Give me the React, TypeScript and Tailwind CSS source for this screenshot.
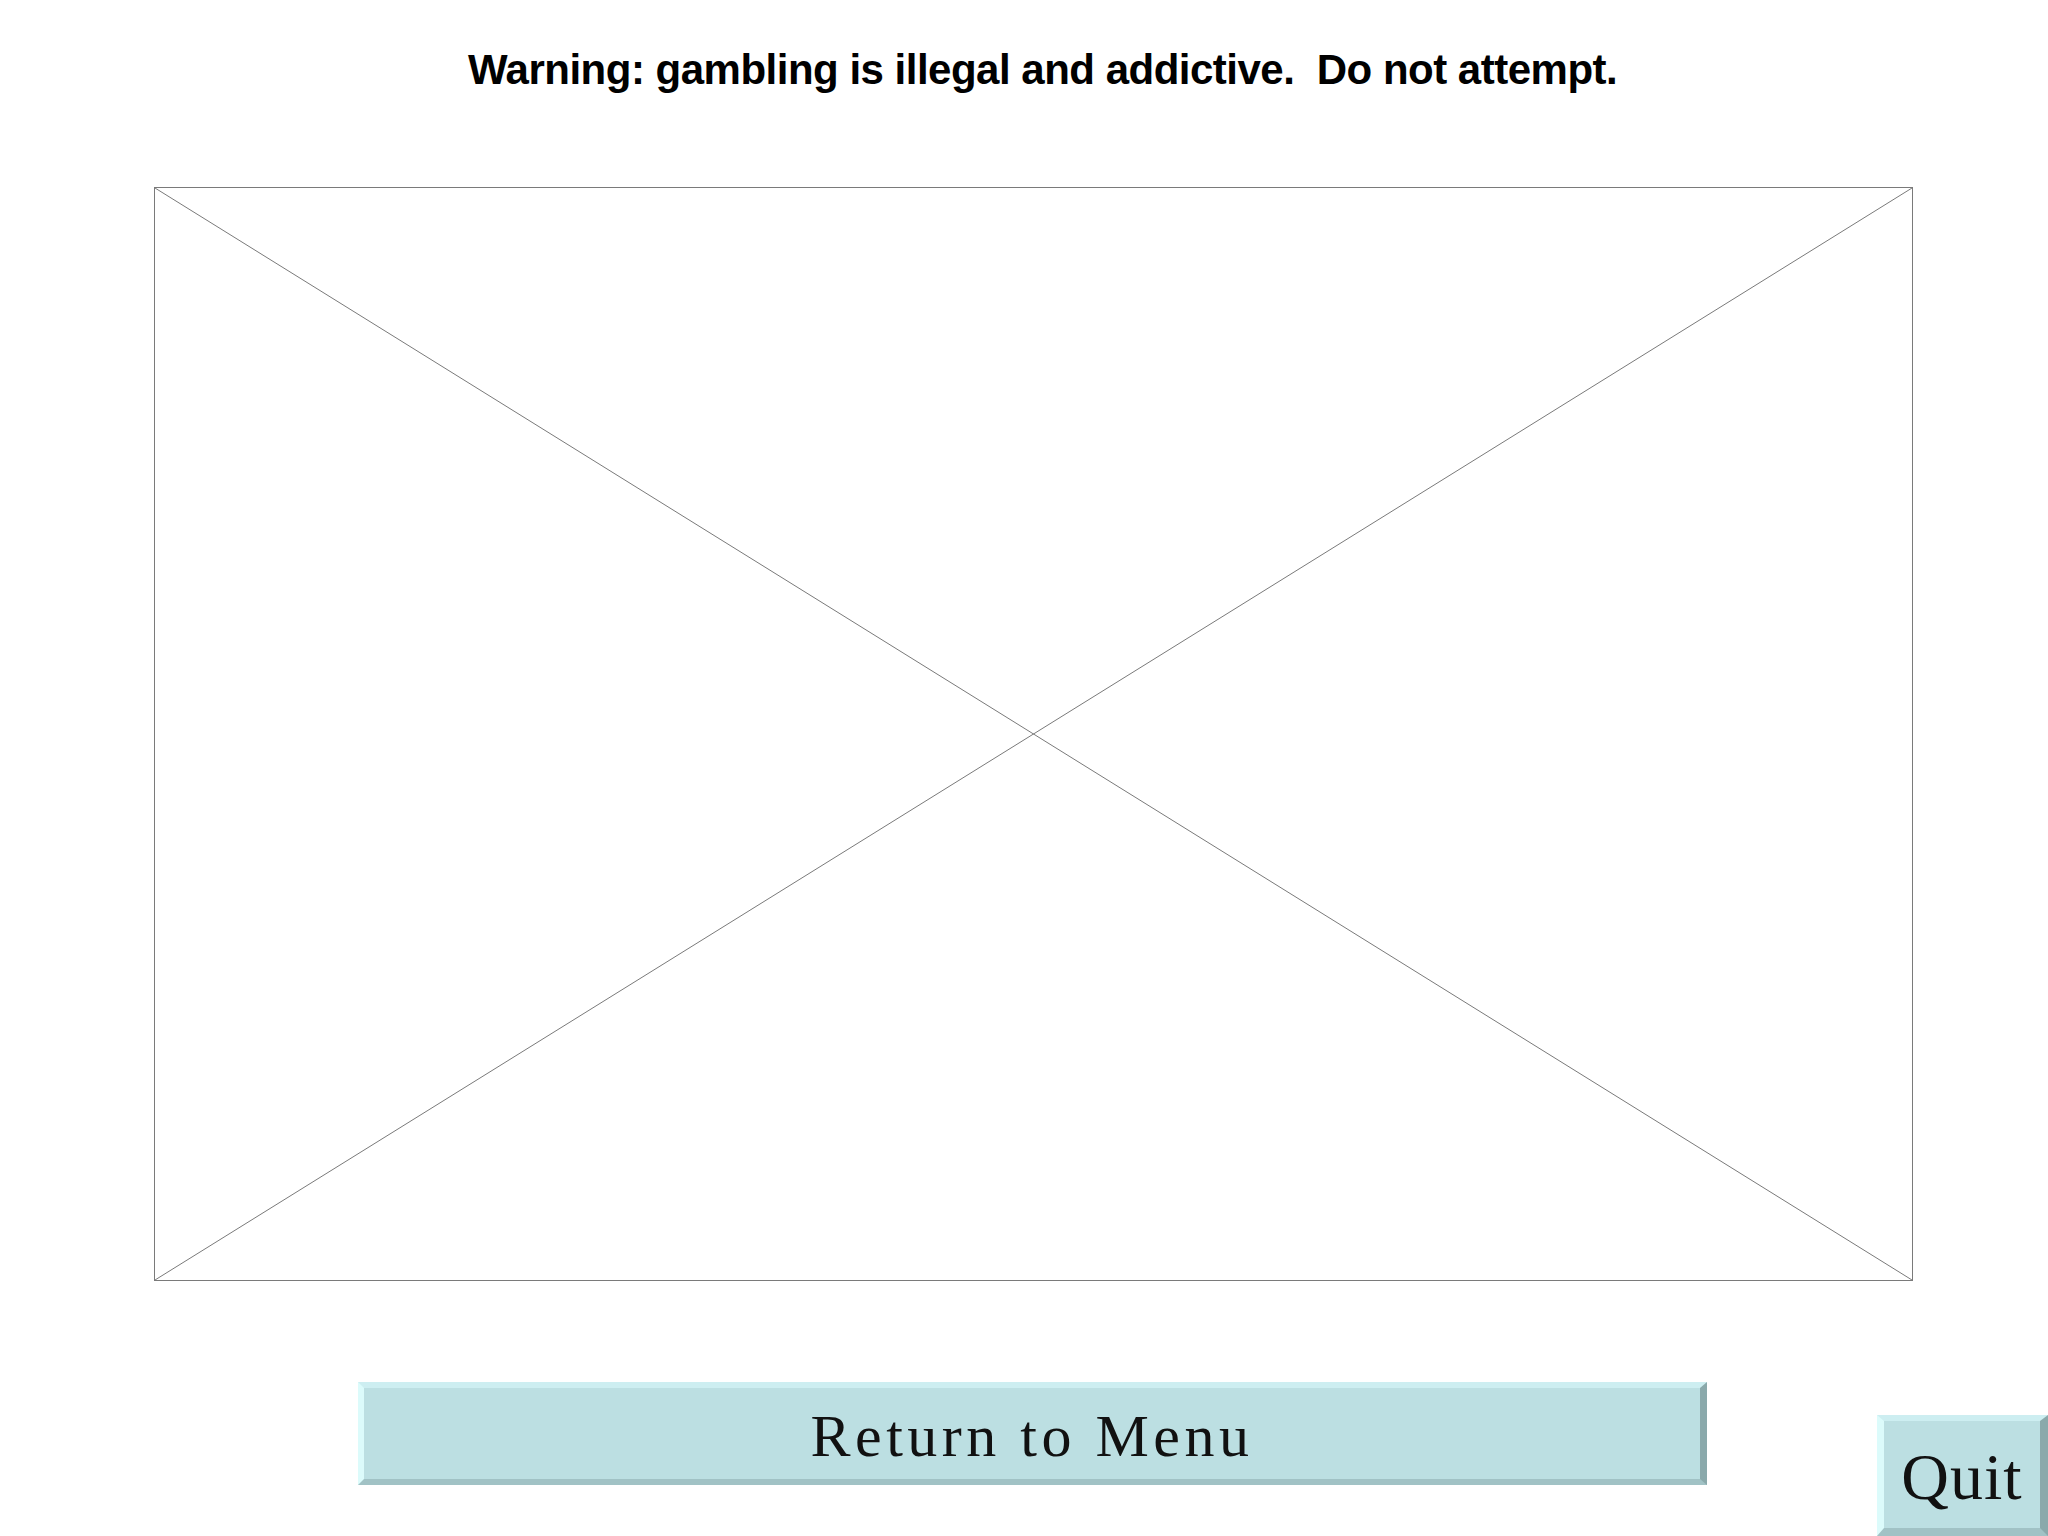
export default function App() {
  return (
    <div className="relative flex h-[1536px] w-[2048px] flex-col overflow-hidden bg-white">
      {/* warning banner */}
      <div className="flex h-[140px] items-start pl-[468px] pt-[49px]">
        <h1 className="whitespace-pre font-['Liberation_Sans',Arial,sans-serif] text-[42px] font-bold leading-none tracking-[-0.5px] text-black">
          Warning: gambling is illegal and addictive.  Do not attempt.
        </h1>
      </div>

      {/* placeholder frame */}
      <div className="mt-[47px] ml-[154px] h-[1094px] w-[1759px] border border-[#7a7a7a]">
        <svg className="h-full w-full" viewBox="0 0 100 100" preserveAspectRatio="none">
          <line x1="0" y1="0" x2="100" y2="100" stroke="#7a7a7a" strokeWidth="1" vectorEffect="non-scaling-stroke" />
          <line x1="100" y1="0" x2="0" y2="100" stroke="#7a7a7a" strokeWidth="1" vectorEffect="non-scaling-stroke" />
        </svg>
      </div>

      {/* bottom actions */}
      <div className="mt-[101px] flex flex-1 items-start">
        <button className="ml-[358px] flex h-[103px] w-[1349px] items-center justify-center border-t-[6px] border-r-[7px] border-b-[6px] border-l-[6px] border-t-[#cdeef1] border-r-[#8aa9ab] border-b-[#a1c2c5] border-l-[#dcfbfb] bg-[#bcdfe2] pt-[4px] font-['Liberation_Serif','Times_New_Roman',serif] text-[60px] leading-none tracking-[4.5px] text-[#111]">
          Return to Menu
        </button>
        <button className="ml-[170px] flex h-[121px] w-[171px] items-center justify-center self-end border-t-[6px] border-r-[8px] border-b-[8px] border-l-[7px] border-t-[#cdeef1] border-r-[#8aa9ab] border-b-[#a1c2c5] border-l-[#dcfbfb] bg-[#bcdfe2] pt-[4px] font-['Liberation_Serif','Times_New_Roman',serif] text-[66px] leading-none tracking-[1px] text-[#111]">
          Quit
        </button>
      </div>
    </div>
  )
}
